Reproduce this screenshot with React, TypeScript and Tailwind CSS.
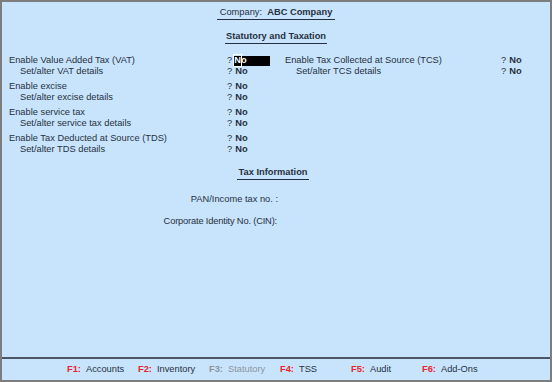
import React from "react";

const font = { fontFamily: '"Liberation Sans", Arial, sans-serif' };

type Row = { label: string; sub?: boolean; value: string; cursor?: boolean };

const left: Row[][] = [
  [
    { label: "Enable Value Added Tax (VAT)", value: "No", cursor: true },
    { label: "Set/alter VAT details", sub: true, value: "No" },
  ],
  [
    { label: "Enable excise", value: "No" },
    { label: "Set/alter excise details", sub: true, value: "No" },
  ],
  [
    { label: "Enable service tax", value: "No" },
    { label: "Set/alter service tax details", sub: true, value: "No" },
  ],
  [
    { label: "Enable Tax Deducted at Source (TDS)", value: "No" },
    { label: "Set/alter TDS details", sub: true, value: "No" },
  ],
];

const right: Row[][] = [
  [
    { label: "Enable Tax Collected at Source (TCS)", value: "No" },
    { label: "Set/alter TCS details", sub: true, value: "No" },
  ],
];

const keys = [
  { k: "F1:", label: "Accounts" },
  { k: "F2:", label: "Inventory" },
  { k: "F3:", label: "Statutory", off: true },
  { k: "F4:", label: "TSS" },
  { k: "F5:", label: "Audit" },
  { k: "F6:", label: "Add-Ons" },
];

function Field({ row, width }: { row: Row; width: string }) {
  return (
    <div className="flex h-[11px] items-center leading-[11px]">
      <span className={`${width} ${row.sub ? "pl-[11px]" : ""} whitespace-nowrap`}>
        {row.label}
      </span>
      <span>?</span>
      {row.cursor ? (
        <span className="ml-[1px] inline-flex h-[10px] w-[37px] items-center bg-black pl-[1px] font-bold text-white">
          <span className="outline outline-1 outline-white">N</span>o
        </span>
      ) : (
        <span className="ml-[3px] font-bold">{row.value}</span>
      )}
    </div>
  );
}

function Column({ groups, width }: { groups: Row[][]; width: string }) {
  return (
    <div className="flex flex-col gap-[4px]">
      {groups.map((g, i) => (
        <div key={i}>
          {g.map((r) => (
            <Field key={r.label} row={r} width={width} />
          ))}
        </div>
      ))}
    </div>
  );
}

export default function App() {
  return (
    <div
      style={font}
      className="flex h-[382px] w-[552px] flex-col border-2 border-[#7d7d7d] bg-[#c8e4fc] text-[9.3px] text-[#263040]"
    >
      <div className="flex-1">
        <div className="mt-[5px] text-center leading-[11px]">
          <span className="inline-block border-b border-[#263040] px-[3px] pb-[1px]">
            Company:&nbsp; <b>ABC Company</b>
          </span>
        </div>
        <div className="mt-[11px] text-center font-bold leading-[11px]">
          <span className="inline-block border-b border-[#263040] px-[1px] pb-[1px]">
            Statutory and Taxation
          </span>
        </div>

        <div className="mt-[11px] flex pl-[7px]">
          <div className="w-[276px]">
            <Column groups={left} width="w-[218px]" />
          </div>
          <div>
            <Column groups={right} width="w-[216px]" />
          </div>
        </div>

        <div className="mt-[12px] pr-[6px] text-center font-bold leading-[11px]">
          <span className="inline-block border-b border-[#263040] px-[1px] pb-[1px]">
            Tax Information
          </span>
        </div>

        <div className="mt-[14px] flex flex-col gap-[11px] leading-[11px]">
          <div className="w-[276px] text-right">PAN/Income tax no. :</div>
          <div className="w-[275px] text-right tracking-[-0.17px]">Corporate Identity No. (CIN):</div>
        </div>
      </div>

      <div className="flex h-[23px] items-center border-t-2 border-[#4b5563] pl-[65px]">
        {keys.map((x) => (
          <div key={x.k} className="flex w-[71px] gap-[5px] whitespace-nowrap leading-[11px]">
            <span className={`font-bold ${x.off ? "text-[#8c949e]" : "text-[#e8232b]"}`}>{x.k}</span>
            <span className={x.off ? "text-[#8c949e]" : ""}>{x.label}</span>
          </div>
        ))}
      </div>
    </div>
  );
}
